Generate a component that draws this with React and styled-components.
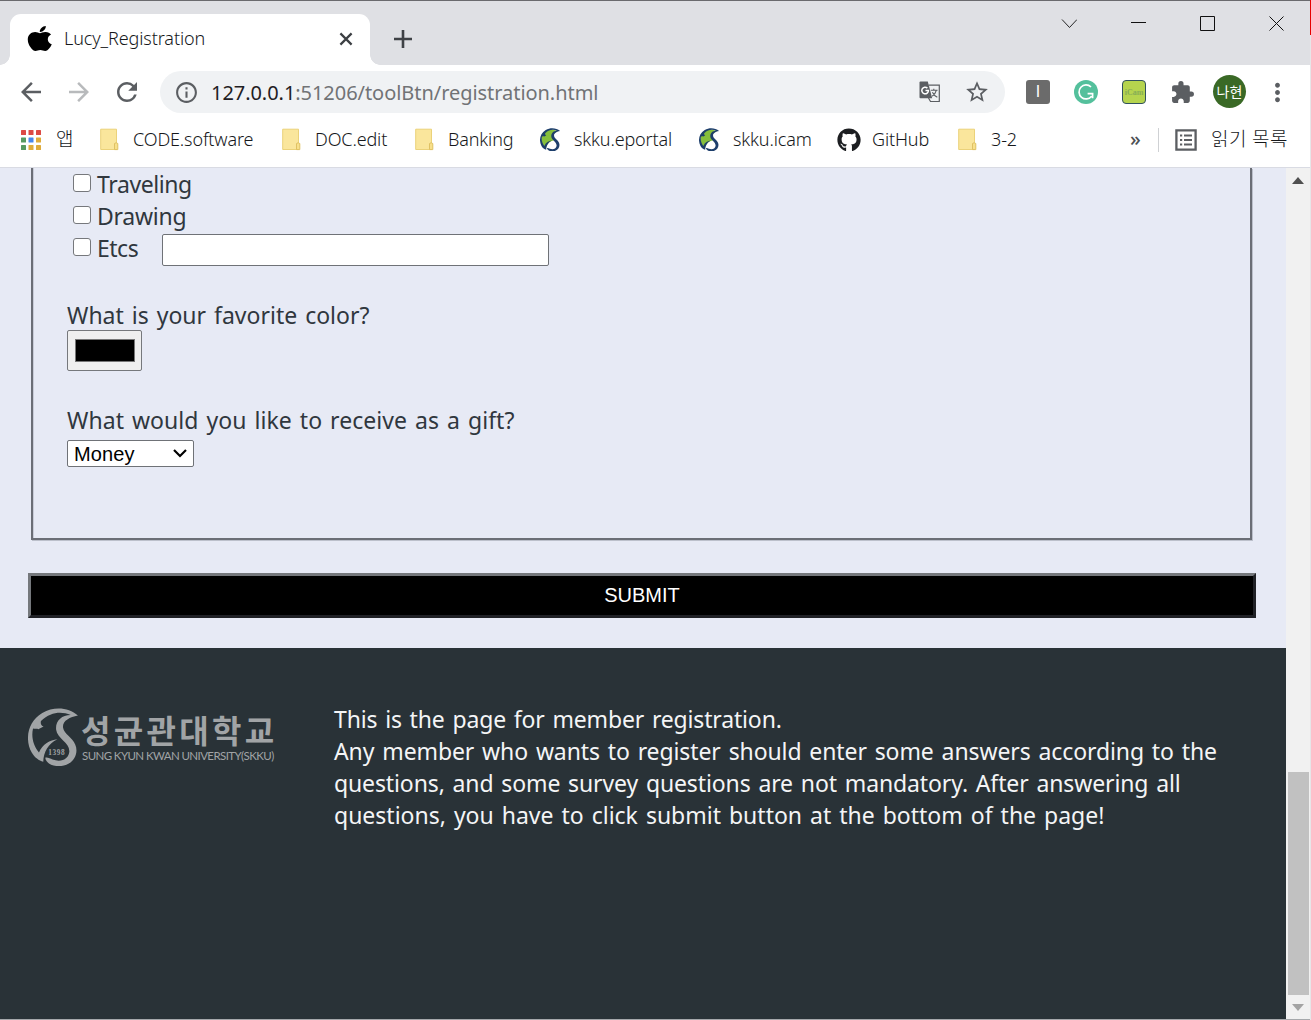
import React from 'react';
import styled, { createGlobalStyle } from 'styled-components';
import { FaApple, FaGithub } from 'react-icons/fa';
import {
  MdArrowBack, MdArrowForward, MdRefresh, MdOutlineInfo,
  MdStarBorder, MdExtension, MdMoreVert,
} from 'react-icons/md';

const GlobalStyle = createGlobalStyle`
  *, *::before, *::after { box-sizing: border-box; }
  body { margin: 0; overflow: hidden; }
`;

const uiFont = '"Noto Sans", "Noto Sans CJK KR", sans-serif';

const Desktop = styled.div`
  display: grid;
  grid-template-columns: 1310px 1px;
  width: 1311px;
  height: 1020px;
  font-family: ${uiFont};
`;
const DesktopEdge = styled.div`
  background: linear-gradient(#e60000 0 35px, #e6e6e8 35px);
`;
const Window = styled.div`
  display: flex;
  flex-direction: column;
  background: #fff;
  border-top: 1px solid #6a6a6e;
  border-bottom: 1px solid #a5a8ab;
  min-width: 0;
`;

/* Tab strip */
const TabStrip = styled.header`
  display: flex;
  align-items: flex-start;
  height: 64px;
  flex: none;
  background: #dfe0e4;
`;
const Curve = styled.i`
  align-self: flex-end;
  width: 10px;
  height: 10px;
  background: radial-gradient(circle at ${p => (p.$right ? '100% 0' : '0 0')}, transparent 9.5px, #fff 10px);
`;
const Tab = styled.div`
  display: flex;
  align-items: center;
  width: 360px;
  height: 51px;
  margin-top: 13px;
  padding: 0 15px 2px 17px;
  border-radius: 11px 11px 0 0;
  background: #fff;
`;
const Favicon = styled.span`
  display: flex;
  width: 37px;
`;
const TabTitle = styled.span`
  flex: 1;
  padding-bottom: 1px;
  font-size: 18px;
  font-weight: 300;
  line-height: 26px;
  letter-spacing: -0.1px;
  color: #16181b;
`;
const IconSlot = styled.span`
  display: flex;
  flex: none;
  align-items: center;
  justify-content: center;
  width: ${p => p.$w}px;
  height: ${p => p.$h || p.$w}px;
  color: ${p => p.$color || '#5b5e62'};
`;
const NewTab = styled(IconSlot)`
  margin: 25px 0 0 10px;
`;
const WindowButtons = styled.div`
  display: flex;
  align-items: center;
  height: 45px;
  margin-left: auto;
`;

/* Toolbar */
const Toolbar = styled.div`
  display: flex;
  align-items: center;
  flex: none;
  height: 54px;
  padding-left: 7px;
`;
const AddressBar = styled.div`
  display: flex;
  align-items: center;
  width: 845px;
  height: 42px;
  margin-left: 9px;
  padding: 0 14px 0 12px;
  border-radius: 21px;
  background: #f0f2f4;
`;
const Url = styled.span`
  flex: 1;
  margin-left: 10px;
  padding-top: 1px;
  font-size: 20px;
  line-height: 30px;
  letter-spacing: -0.05px;
  color: #717376;
`;
const Host = styled.span`
  color: #1f2023;
`;
const AddressActions = styled.div`
  display: flex;
  align-items: center;
  gap: 22px;
`;
const Extensions = styled.div`
  display: flex;
  align-items: center;
  flex: 1;
  padding-left: 9px;
`;
const Badge = styled.span`
  display: flex;
  align-items: center;
  justify-content: center;
  width: 24px;
  height: 24px;
  border-radius: 3px;
  background: #6b6b6b;
  color: #fff;
  font: 16px "Liberation Sans", Arial, sans-serif;
`;
const IcamBadge = styled(Badge)`
  border: 1px solid #31515f;
  border-radius: 4px;
  background: #b5d44e;
  color: #86ad55;
  font: 700 8px "Liberation Serif", serif;
`;
const Avatar = styled.span`
  display: flex;
  flex: none;
  align-items: center;
  justify-content: center;
  width: 33px;
  height: 33px;
  margin: 0 0 2px 7px;
  border-radius: 50%;
  background: #3a6926;
  color: #fff;
  font: 14px "Noto Sans CJK KR", sans-serif;
`;

/* Bookmarks */
const BookmarkBar = styled.nav`
  display: flex;
  align-items: center;
  flex: none;
  height: 49px;
  padding: 0 0 7px 21px;
  border-bottom: 1px solid #d9dbe3;
`;
const Bookmark = styled.a`
  display: flex;
  align-items: center;
  flex: none;
  width: ${p => p.$w}px;
  color: #16181b;
  font-size: 18px;
  font-weight: 300;
  line-height: 24px;
  letter-spacing: -0.14px;
  white-space: nowrap;
`;
const BookmarkLabel = styled.span`
  padding-bottom: 1px;
`;
const BookmarkIcon = styled.span`
  display: flex;
  flex: none;
  width: ${p => p.$w || 33}px;
`;
const Korean = styled.span`
  padding-bottom: 3px;
  font: 300 19px/24px "Noto Sans CJK KR", sans-serif;
  letter-spacing: ${p => p.$ls || 0}px;
  white-space: nowrap;
  color: #16181b;
`;
const Overflow = styled.span`
  margin-left: auto;
  width: 28px;
  padding-bottom: 2px;
  color: #4d5054;
  font-size: 20px;
  font-weight: 500;
  line-height: 24px;
`;
const Separator = styled.i`
  width: 1px;
  height: 24px;
  background: #cfd1d4;
`;
const ReadingList = styled.div`
  display: flex;
  align-items: center;
  width: 151px;
  padding-left: 14px;
  gap: 12px;
`;

/* Page */
const Viewport = styled.div`
  display: grid;
  grid-template-columns: 1286px 24px;
  flex: 1;
  min-height: 0;
`;
const Page = styled.main`
  display: flex;
  flex-direction: column;
  background: #e7eaf5;
  min-height: 0;
`;
const Form = styled.form`
  display: flex;
  flex-direction: column;
  height: 480px;
  padding: 0 30px 0 28px;
`;
const Fieldset = styled.div`
  height: 372px;
  margin: 0 4px 0 3px;
  padding: 0 34px;
  border: solid #6b6e76;
  border-width: 0 2px 2px;
  box-shadow: 1px 1px 0 #bcc0cb, inset 1px 0 0 #c9ccd8;
`;
const Option = styled.label`
  display: flex;
  align-items: flex-start;
  height: 32px;
`;
const Checkbox = styled.input`
  appearance: none;
  flex: none;
  width: 18px;
  height: 18px;
  margin: 6px 6px 0;
  border: 1.5px solid #76787c;
  border-radius: 3px;
  background: #fff;
`;
const Copy = styled.span`
  font-size: 23px;
  line-height: ${p => p.$lh || 32}px;
  letter-spacing: ${p => p.$ls}px;
  word-spacing: 2px;
  color: ${p => p.$color || '#30373e'};
  white-space: nowrap;
`;
const OtherInput = styled.input`
  width: 387px;
  height: 32px;
  margin: 2px 0 0 24px;
  border: 1px solid #6f7277;
  border-radius: 2px;
  background: #fff;
`;
const Question = styled.div`
  display: flex;
  flex-direction: column;
  align-items: flex-start;
  padding-top: ${p => p.$top}px;
`;
const ColorWell = styled.button`
  width: 75px;
  height: 41px;
  padding: 8px 6px 8px 7px;
  border: 1px solid #76787c;
  border-radius: 2px;
  background: #efefef;
`;
const Swatch = styled.span`
  display: block;
  width: 60px;
  height: 23px;
  border: 1px solid #777;
  background: #000;
`;
const Select = styled.button`
  display: flex;
  align-items: center;
  justify-content: space-between;
  width: 127px;
  height: 27px;
  margin-top: 4px;
  padding: 1px 5px 0 6px;
  border: 1px solid #6f7277;
  border-radius: 2px;
  background: #fff;
  color: #000;
  font: 20px "Liberation Sans", Arial, sans-serif;
  letter-spacing: 0.1px;
`;
const Submit = styled.button`
  width: 1228px;
  height: 45px;
  margin-top: 33px;
  padding: 0;
  border: 3px solid;
  border-color: #75787c #202126 #202126 #75787c;
  background: #000;
  color: #fff;
  font: 20px "Liberation Sans", Arial, sans-serif;
`;
const Footer = styled.footer`
  display: flex;
  flex: 1;
  padding: 55px 28px 0;
  background: #293237;
`;
const University = styled.div`
  display: flex;
  width: 306px;
  height: 58px;
  margin-top: 5px;
`;
const UniversityNames = styled.div`
  display: flex;
  flex-direction: column;
  padding: 3px 0 0 2px;
  color: #a1a4a6;
  white-space: nowrap;
`;
const NameKo = styled.span`
  font: 700 32px/36px "Noto Sans CJK KR", sans-serif;
  letter-spacing: 3.3px;
`;
const NameEn = styled.span`
  margin: 1px 0 0 1px;
  font: 11.5px/16px Lato, sans-serif;
  letter-spacing: -0.59px;
`;
const Description = styled.p`
  display: flex;
  flex-direction: column;
  margin: 0;
`;
const Scrollbar = styled.aside`
  display: flex;
  flex-direction: column;
  align-items: center;
  background: #f1f1f1;
`;
const ScrollTrack = styled.div`
  display: flex;
  flex: 1;
  width: 21px;
  padding-top: 580px;
`;
const ScrollThumb = styled.div`
  flex: 1;
  background: #c1c1c1;
`;

const Emblem = ({ size, color, leaf }) => (
  <svg width={size} height={size * 1.14} viewBox="24 22 152 176" fill="none">
    {leaf && <path d="M36 72 C55 35 105 20 158 46 C122 60 108 90 128 116 C98 118 76 142 68 172 C34 145 27 110 36 72Z" fill="#86bf3c" />}
    <path fill={color} d="M174 45 C146 20 102 16 66 37 C22 62 12 118 34 157 C43 173 56 181 69 185 C70 156 84 130 112 117 C89 119 67 132 56 157 C39 137 32 110 38 84 C45 87 48 83 54 86 L70 78 C63 76 60 69 62 61 C92 33 124 31 152 43 C124 43 105 62 108 88 C111 115 148 126 148 153 C147 175 125 188 97 178 C90 175 80 170 75 173 C78 195 112 204 139 194 C164 184 176 157 166 133 C157 111 132 101 129 82 C126 62 148 50 174 45Z" />
    {!leaf && <text x="84" y="163" fill={color} fontFamily="Liberation Serif, serif" fontWeight="700" fontSize="22" textLength="50">1398</text>}
  </svg>
);

const Folder = () => (
  <svg width="20" height="23" viewBox="0 0 20 23">
    <path d="M.7 1.2H16.5V21.5H.7Z" fill="#fae69c" stroke="#ebd27a" />
    <path d="M14.5 21.6V15.5Q16.2 14 17.8 15.5V21.6Z" fill="#f8e08b" stroke="#dfc163" />
  </svg>
);

const Translate = () => (
  <svg width="22" height="22" viewBox="0 0 22 22" fill="none">
    <path d="M9.5 4.1H20.3V20.5H11.5L9.5 17" stroke="#5b5e62" strokeWidth="1.2" />
    <path d="M1.5.5H8.8L13.2 17.2H1.5Q.5 17.2.5 16.2V1.5Q.5.5 1.5.5Z" fill="#5b5e62" />
    <path d="M8.4 7.1A3.3 3.3 0 1 0 9.4 9.4H6.5" stroke="#fff" strokeWidth="1.5" />
    <path d="M11.8 9.2H18.6M14.8 7.7V9.2M17.4 9.2Q16.4 13.2 13.2 15.2M13.4 11.2Q15 14.5 18.3 16.2" stroke="#5b5e62" strokeWidth="1.1" />
  </svg>
);

const ReadingIcon = () => (
  <svg width="22" height="22" viewBox="0 0 22 22" fill="none" stroke="#5b5e62" strokeWidth="2.3">
    <path d="M1.4 1.4H20.6V20.6H1.4Z" />
    <path d="M5 6.5H7.2M9 6.5H17M5 11H7.2M9 11H17M5 15.5H7.2M9 15.5H17" strokeWidth="2" />
  </svg>
);

const appColors = ['#dc4a45', '#dc4a45', '#dc4a45', '#589a62', '#4788ee', '#dfac3c', '#589a62', '#dfac3c', '#dfac3c'];
const AppsGrid = () => (
  <svg width="20" height="20" viewBox="0 0 20 20">
    {appColors.map((c, i) => <rect key={i} x={(i % 3) * 7.5} y={Math.floor(i / 3) * 7.5} width="5" height="5" rx=".5" fill={c} />)}
  </svg>
);

const folderMark = { icon: <Folder />, iw: 33 };
const skku = <Emblem size={20.5} color="#1d3e6b" leaf />;
const bookmarks = [
  { ...folderMark, label: 'CODE.software', w: 182 },
  { ...folderMark, label: 'DOC.edit', w: 133 },
  { ...folderMark, label: 'Banking', w: 125 },
  { icon: skku, iw: 34, label: 'skku.eportal', w: 159 },
  { icon: skku, iw: 34, label: 'skku.icam', w: 138 },
  { icon: <FaGithub size={24} color="#1c1e21" />, iw: 35, label: 'GitHub', w: 121 },
  { ...folderMark, label: '3-2', w: 80 },
];

const options = [['Traveling', -0.4], ['Drawing', -0.25], ['Etcs', -0.5]];
const footerLines = [
  ['This is the page for member registration.', -0.16],
  ['Any member who wants to register should enter some answers according to the', -0.1],
  ['questions, and some survey questions are not mandatory. After answering all', -0.12],
  ['questions, you have to click submit button at the bottom of the page!', 0],
];

const WindowIcon = ({ d, thin }) => (
  <IconSlot $w={69} $h={45} $color="#111">
    <svg width="17" height="17" viewBox="0 0 17 17" fill="none" stroke="currentColor" strokeWidth={thin ? 0.9 : 1}><path d={d} /></svg>
  </IconSlot>
);

export default function App() {
  return (
    <Desktop>
      <GlobalStyle />
      <Window>
        <TabStrip>
          <Curve />
          <Tab>
            <Favicon><FaApple width={26} height={25} style={undefined} size={undefined} viewBox="-8 32 392 448" preserveAspectRatio="none" fontSize={25} color="#000" /></Favicon>
            <TabTitle>Lucy_Registration</TabTitle>
            <IconSlot $w={18} $color="#3c3f43">
              <svg width="14" height="14" viewBox="0 0 14 14" stroke="currentColor" strokeWidth="2.2"><path d="M1.4 1.4 12.6 12.6M12.6 1.4 1.4 12.6" /></svg>
            </IconSlot>
          </Tab>
          <Curve $right />
          <NewTab $w={26} $color="#3f4246">
            <svg width="18" height="18" viewBox="0 0 18 18" stroke="currentColor" strokeWidth="2.6"><path d="M9 0V18M0 9H18" /></svg>
          </NewTab>
          <WindowButtons>
            <WindowIcon thin d="M2 4.5 9.5 12.5 17 4.5" />
            <WindowIcon d="M2 7.5H17" />
            <WindowIcon d="M2.5 1.5H16.5V15.5H2.5Z" />
            <WindowIcon d="M2.5 1.5 16.5 15.5M16.5 1.5 2.5 15.5" />
          </WindowButtons>
        </TabStrip>

        <Toolbar>
          <IconSlot $w={48}><MdArrowBack size={30} /></IconSlot>
          <IconSlot $w={48} $color="#b8babc"><MdArrowForward size={30} /></IconSlot>
          <IconSlot $w={48}><MdRefresh size={30} /></IconSlot>
          <AddressBar>
            <IconSlot $w={29}><MdOutlineInfo size={25} /></IconSlot>
            <Url><Host>127.0.0.1</Host>:51206/toolBtn/registration.html</Url>
            <AddressActions>
              <IconSlot $w={22}><Translate /></IconSlot>
              <IconSlot $w={28}><MdStarBorder size={26} /></IconSlot>
            </AddressActions>
          </AddressBar>
          <Extensions>
            <IconSlot $w={48}><Badge>I</Badge></IconSlot>
            <IconSlot $w={48}>
              <svg width="24" height="24" viewBox="0 0 24 24" fill="none">
                <circle cx="12" cy="12" r="12" fill="#54c09c" />
                <path d="M17 7A7 7 0 1 0 17.6 16.2M18.6 18.2V13.6H13.6" stroke="#fff" strokeWidth="1.7" />
              </svg>
            </IconSlot>
            <IconSlot $w={48}><IcamBadge>iCam</IcamBadge></IconSlot>
            <IconSlot $w={48}><MdExtension size={25} /></IconSlot>
            <Avatar>나현</Avatar>
            <IconSlot $w={62}><MdMoreVert size={29} /></IconSlot>
          </Extensions>
        </Toolbar>

        <BookmarkBar>
          <Bookmark $w={79}>
            <BookmarkIcon $w={35}><AppsGrid /></BookmarkIcon>
            <Korean>앱</Korean>
          </Bookmark>
          {bookmarks.map(b => (
            <Bookmark key={b.label} $w={b.w}>
              <BookmarkIcon $w={b.iw}>{b.icon}</BookmarkIcon>
              <BookmarkLabel>{b.label}</BookmarkLabel>
            </Bookmark>
          ))}
          <Overflow>»</Overflow>
          <Separator />
          <ReadingList>
            <IconSlot $w={26}><ReadingIcon /></IconSlot>
            <Korean $ls={0.6}>읽기 목록</Korean>
          </ReadingList>
        </BookmarkBar>

        <Viewport>
          <Page>
            <Form>
              <Fieldset>
                {options.map(([label, ls]) => (
                  <Option key={label}>
                    <Checkbox type="checkbox" />
                    <Copy $ls={ls}>{label}</Copy>
                    {label === 'Etcs' && <OtherInput type="text" />}
                  </Option>
                ))}
                <Question $top={36}>
                  <Copy $ls={0} $lh={30}>What is your favorite color?</Copy>
                  <ColorWell type="button"><Swatch /></ColorWell>
                </Question>
                <Question $top={34}>
                  <Copy $ls={0.04} $lh={31}>What would you like to receive as a gift?</Copy>
                  <Select type="button">
                    Money
                    <svg width="16" height="12" viewBox="0 0 16 12" fill="none" stroke="#000" strokeWidth="2.2"><path d="M2 2 8 8 14 2" /></svg>
                  </Select>
                </Question>
              </Fieldset>
              <Submit type="button">SUBMIT</Submit>
            </Form>
            <Footer>
              <University>
                <Emblem size={51} color="#a1a4a6" />
                <UniversityNames>
                  <NameKo>성균관대학교</NameKo>
                  <NameEn>SUNG KYUN KWAN UNIVERSITY(SKKU)</NameEn>
                </UniversityNames>
              </University>
              <Description>
                {footerLines.map(([text, ls]) => <Copy key={text} $ls={ls} $color="#f4f5f6">{text}</Copy>)}
              </Description>
            </Footer>
          </Page>
          <Scrollbar>
            <IconSlot $w={24} $color="#505050">
              <svg width="12" height="7" viewBox="0 0 12 7"><path d="M0 7 6 0 12 7Z" fill="currentColor" /></svg>
            </IconSlot>
            <ScrollTrack><ScrollThumb /></ScrollTrack>
            <IconSlot $w={24} $color="#a3a3a3">
              <svg width="12" height="7" viewBox="0 0 12 7"><path d="M0 0 6 7 12 0Z" fill="currentColor" /></svg>
            </IconSlot>
          </Scrollbar>
        </Viewport>
      </Window>
      <DesktopEdge />
    </Desktop>
  );
}
